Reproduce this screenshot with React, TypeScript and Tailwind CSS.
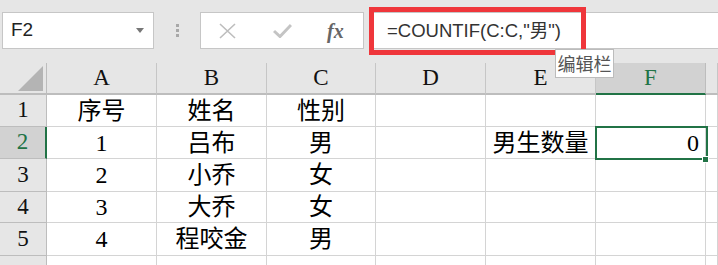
import React from "react";

const serif = { fontFamily: "'Liberation Serif', 'Noto Sans CJK SC', serif" };
const sans = { fontFamily: "'Liberation Sans', 'Noto Sans CJK SC', sans-serif" };

const cols = ["A", "B", "C", "D", "E", "F", ""];
const rows: { h: string; cells: string[] }[] = [
  { h: "h-[32px]", cells: ["序号", "姓名", "性别", "", "", "", ""] },
  { h: "h-[32px]", cells: ["1", "吕布", "男", "", "男生数量", "0", ""] },
  { h: "h-[33px]", cells: ["2", "小乔", "女", "", "", "", ""] },
  { h: "h-[31px]", cells: ["3", "大乔", "女", "", "", "", ""] },
  { h: "h-[33px]", cells: ["4", "程咬金", "男", "", "", "", ""] },
  { h: "h-[20px]", cells: ["", "", "", "", "", "", ""] },
];

export default function App() {
  return (
    <div className="relative w-[718px] h-[265px] overflow-hidden bg-[#e6e6e6]">
      {/* toolbar */}
      <div className="flex h-[63px] items-start pt-[12px]">
        <div
          className="ml-[2px] w-[152px] h-[37px] bg-white border border-[#c6c6c6] flex items-center justify-between pl-[8px] pr-[9px] text-[19px] text-[#222]"
          style={sans}
        >
          <span>F2</span>
          <svg width="8" height="5" viewBox="0 0 8 5">
            <path d="M0 0 H8 L4 5 Z" fill="#777" />
          </svg>
        </div>
        <div className="w-[46px] h-[37px] flex flex-col items-center justify-center gap-[2px]">
          <div className="w-[3px] h-[3px] bg-[#a8a8a8]" />
          <div className="w-[3px] h-[3px] bg-[#a8a8a8]" />
          <div className="w-[3px] h-[3px] bg-[#a8a8a8]" />
        </div>
        <div className="w-[164px] h-[37px] bg-white border border-[#c6c6c6] flex items-center">
          <svg className="ml-[18px]" width="17" height="16" viewBox="0 0 17 16">
            <path d="M1 1 L16 15 M16 1 L1 15" stroke="#bdbdbd" strokeWidth="1.6" fill="none" />
          </svg>
          <svg className="ml-[37px]" width="19" height="15" viewBox="0 0 19 15">
            <path d="M1 8 L7 13.5 L18 2" stroke="#c4c4c4" strokeWidth="3" fill="none" />
          </svg>
          <span
            className="ml-[35px] text-[20px] italic font-bold text-[#666] leading-none"
            style={serif}
          >
            fx
          </span>
        </div>
        <div
          className="ml-[5px] flex-1 h-[37px] bg-white border border-[#c6c6c6] border-r-0 flex items-center pl-[17px] text-[18.5px] text-[#333]"
          style={sans}
        >
          =COUNTIF(C:C,"男")
        </div>
      </div>

      {/* sheet */}
      <div className="grid grid-cols-[47px_110px_110px_109px_110px_110px_110px_1fr]">
        {/* header row */}
        <div className="h-[32px] bg-[#e6e6e6] border-r border-b-2 border-[#bdbdbd] flex items-end justify-end pr-[3px] pb-[2px]">
          <svg width="25" height="25" viewBox="0 0 25 25">
            <path d="M25 0 V25 H0 Z" fill="#b4b4b4" />
          </svg>
        </div>
        {cols.map((c, k) => {
          const sel = c === "F";
          return (
            <div
              key={k}
              className={
                sel
                  ? "h-[32px] bg-[#d2d2d2] border-r border-r-[#bdbdbd] border-b-2 border-b-[#217346] flex items-center justify-center text-[23px] text-[#217346]"
                  : "h-[32px] bg-[#e6e6e6] border-r border-r-[#c6c6c6] border-b-2 border-b-[#bdbdbd] flex items-center justify-center text-[23px] text-[#111]"
              }
              style={serif}
            >
              {c}
            </div>
          );
        })}
        {rows.map((r, i) => {
          const sel = i === 1;
          return (
            <React.Fragment key={i}>
              <div
                className={
                  sel
                    ? `${r.h} bg-[#d2d2d2] border-r-2 border-r-[#217346] border-b border-b-[#bdbdbd] flex items-center justify-center text-[23px] text-[#217346]`
                    : `${r.h} bg-[#e6e6e6] border-r border-r-[#bdbdbd] border-b border-b-[#bdbdbd] flex items-center justify-center text-[23px] text-[#111]`
                }
                style={serif}
              >
                {i < 5 ? i + 1 : ""}
              </div>
              {r.cells.map((v, j) => (
                <div
                  key={j}
                  className={`${r.h} bg-white border-r border-b border-[#d4d4d4] flex items-center ${
                    j === 5 ? "justify-end pr-[6px]" : "justify-center"
                  } text-[24px] text-black whitespace-nowrap`}
                  style={serif}
                >
                  {v}
                </div>
              ))}
            </React.Fragment>
          );
        })}
      </div>

      {/* selection */}
      <div className="absolute left-[595px] top-[126px] w-[113px] h-[34px] border-2 border-[#217346]" />
      <div className="absolute left-[702px] top-[156px] w-[7px] h-[7px] bg-[#217346] border border-white" />

      {/* red highlight */}
      <div className="absolute left-[369px] top-[7px] w-[217px] h-[48px] border-[5px] border-[#ef363b]" />

      {/* tooltip */}
      <div
        className="absolute left-[555px] top-[49px] w-[59px] h-[29px] bg-white border border-[#bcbcbc] flex items-center justify-center text-[18px] text-[#555]"
        style={{ fontFamily: "'Noto Sans CJK SC', sans-serif" }}
      >
        编辑栏
      </div>
    </div>
  );
}
